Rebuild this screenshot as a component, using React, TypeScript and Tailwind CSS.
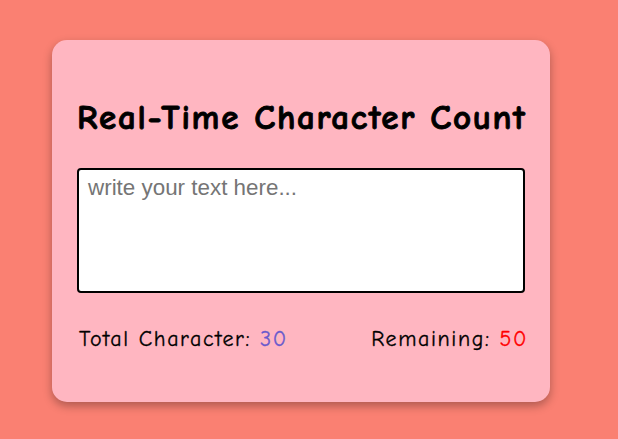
import { useState } from "react";

const comic = { fontFamily: '"Comic Sans MS", "Comic Neue", "Comic Sans", cursive' };

const App = () => {
  const [text, setText] = useState("");
  const max = 80;
  const total = 30;

  return (
    <div className="min-h-[439px] w-full bg-[#fa8072] pt-[40px] pl-[52px]">
      <div
        className="w-[498px] rounded-[15px] bg-[#ffb6c1] px-[25px] pt-[58px] pb-[49px] shadow-[0_4px_10px_rgba(0,0,0,0.3)]"
        style={comic}
      >
        <h1 className="text-center text-[35px] leading-[40px] font-black tracking-[1.7px] whitespace-nowrap text-black [-webkit-text-stroke:0.9px_black]">
          Real-Time Character Count
        </h1>
        <textarea
          value={text}
          onChange={(e) => setText(e.target.value)}
          placeholder="write your text here..."
          className="mt-[30px] block h-[125px] w-full resize-none rounded-[4px] border-2 border-black bg-white px-[9px] pt-[5px] font-['Liberation_Sans',Arial,sans-serif] text-[22.4px] leading-[26px] text-black outline-none placeholder:text-[#757575]"
        />
        <div className="mt-[32px] flex items-center justify-between text-[22px] leading-[28px] tracking-[1.6px] text-black [-webkit-text-stroke:0.3px_currentColor]">
          <p className="pl-[2px]">
            Total Character: <span className="text-[#6a5acd]">{total}</span>
          </p>
          <p className="mr-[-3px]">
            Remaining: <span className="text-[#ff0000]">{max - total}</span>
          </p>
        </div>
      </div>
    </div>
  );
};

export default App;
